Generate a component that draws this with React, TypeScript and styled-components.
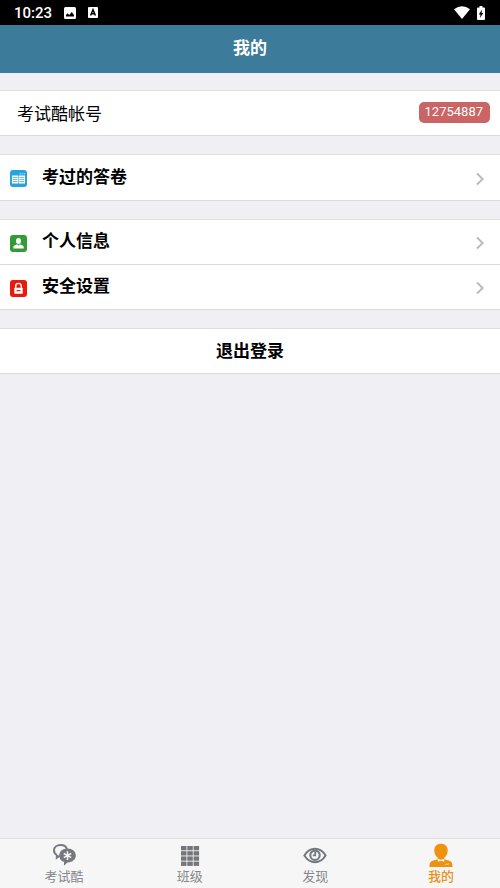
import React from "react";
import styled, { createGlobalStyle } from "styled-components";

const GlobalStyle = createGlobalStyle`
  * { box-sizing: border-box; }
  body {
    margin: 0;
    background: #efeff4;
    color: #000;
    font-family: Roboto, "Noto Sans CJK SC", sans-serif;
  }
  button { font: inherit; color: inherit; border: 0; margin: 0; padding: 0; background: none; cursor: pointer; }
  svg { display: block; flex: none; }
`;

const Screen = styled.div`
  display: flex;
  flex-direction: column;
  min-height: 100vh;
`;

const StatusBar = styled.div`
  display: flex;
  align-items: center;
  justify-content: space-between;
  height: 25px;
  padding: 0 15px 0 14px;
  background: #000;
  color: #fff;
  font-size: 15px;
  font-weight: 500;
`;

const StatusGroup = styled.div<{ $gap: number }>`
  display: flex;
  align-items: center;
  gap: ${(p) => p.$gap}px;
`;

const Header = styled.header`
  display: flex;
  align-items: center;
  justify-content: center;
  height: 48px;
  padding-bottom: 2px;
  background: #3d7b9b;
  color: #fff;
`;

const Title = styled.h1`
  margin: 0;
  font-size: 17px;
  line-height: 24px;
  font-weight: 700;
`;

const Main = styled.main`
  flex: 1;
  display: flex;
  flex-direction: column;
  gap: 18px;
  padding: 17px 0;
`;

const Group = styled.section`
  border-top: 1px solid #dedee1;
  border-bottom: 1px solid #dadadd;
  background: #fff;
`;

const AccountRow = styled.div`
  display: flex;
  align-items: center;
  justify-content: space-between;
  height: 44px;
  padding: 0 10px 2px 17px;
  font-size: 17px;
`;

const Badge = styled.span`
  height: 21px;
  padding: 0 7px 0 6px;
  border-radius: 5px;
  background: #cb6464;
  color: #fff;
  font-size: 13px;
  line-height: 19px;
`;

const LinkRow = styled.button`
  display: flex;
  align-items: center;
  width: 100%;
  height: 45px;
  padding: 2px 16px 0 10px;
  text-align: left;

  &:not(:last-child) {
    height: 44px;
  }

  & + & {
    border-top: 1px solid #dadadd;
  }
`;

const RowLabel = styled.span`
  flex: 1;
  padding: 0 0 4px 15px;
  font-size: 17px;
  line-height: 24px;
  font-weight: 700;
`;

const LogoutButton = styled.button`
  display: block;
  width: 100%;
  height: 44px;
  padding-bottom: 4px;
  font-size: 17px;
  font-weight: 700;
`;

const TabBar = styled.nav`
  position: sticky;
  bottom: 0;
  display: flex;
  justify-content: space-between;
  height: 50px;
  padding: 0 29px 0 34px;
  border-top: 1px solid #dedee1;
  background: #f6f6f6;
`;

const Tab = styled.button<{ $active?: boolean }>`
  display: flex;
  flex-direction: column;
  align-items: center;
  gap: 1px;
  width: 60px;
  padding-top: 4px;
  font-size: 13px;
  line-height: 18px;
  font-weight: ${(p) => (p.$active ? 500 : 400)};
  color: ${(p) => (p.$active ? "#e8921a" : "#85888c")};
`;

const PictureIcon = () => (
  <svg width="12" height="12" viewBox="0 0 12 12" aria-hidden="true">
    <rect width="12" height="12" rx="1.5" fill="#fff" />
    <path d="M2 9.5V8l1.6-1.7L5.2 8l2.6-3L10 8v1.5z" fill="#000" />
  </svg>
);

const InputModeIcon = () => (
  <svg width="10" height="11" viewBox="0 0 10 11" aria-hidden="true">
    <rect width="10" height="11" rx="1" fill="#fff" />
    <path d="M2.6 8.5 5 2.8l2.4 5.7M3.5 6.8h3" fill="none" stroke="#000" strokeWidth="1.5" />
  </svg>
);

const WifiIcon = () => (
  <svg width="16" height="13" viewBox="0 0 16 13" aria-hidden="true">
    <path d="M0 3.2Q8-2.8 16 3.2L8 13z" fill="#fff" />
  </svg>
);

const BatteryIcon = () => (
  <svg width="8" height="14" viewBox="0 0 8 14" aria-hidden="true">
    <path d="M2.5 0h3v1.5H7q1 0 1 1V13q0 1-1 1H1q-1 0-1-1V2.500q0-1 1-1h1.500z" fill="#fff" />
    <path d="M5 3.500 1.800 8.400h1.700L3 12l3.300-5H4.500z" fill="#000" />
  </svg>
);

const PapersIcon = () => (
  <svg width="17" height="17" viewBox="0 0 17 17" aria-hidden="true">
    <rect width="17" height="17" rx="3" fill="#27a3dd" />
    <path d="M2 5.500h6.200v8H2zM8.800 5.500H15v8H8.800z" fill="#fff" />
    <path d="M3 7.500h4.500M3 9.500h4.500M3 11.500h4.500M9.500 7.500H14M9.500 9.500H14M9.500 11.500H14" stroke="#27a3dd" strokeWidth=".7" />
    <path d="M9.500 3.800h1.300M11.600 3.800h1.300M13.700 3.800H15" stroke="#b9e2f5" />
  </svg>
);

const ProfileIcon = () => (
  <svg width="17" height="17" viewBox="0 0 17 17" aria-hidden="true">
    <rect width="17" height="17" rx="3" fill="#339b35" />
    <ellipse cx="8.500" cy="6" rx="2.500" ry="2.900" fill="#fff" />
    <path d="M3.300 13.500v-1.300q0-1.300 1.500-1.900l2.500-1 1.200 1.500 1.200-1.500 2.500 1q1.500.6 1.500 1.900v1.300z" fill="#fff" />
  </svg>
);

const LockIcon = () => (
  <svg width="17" height="17" viewBox="0 0 17 17" aria-hidden="true">
    <rect width="17" height="17" rx="3" fill="#e9190c" />
    <path d="M5.700 8V6.200q0-2.800 2.800-2.800t2.800 2.800V8" fill="none" stroke="#fff" strokeWidth="1.400" />
    <rect x="4.300" y="7.800" width="8.400" height="6" rx=".5" fill="#fff" />
    <path d="M6.500 10.700h4" stroke="#e9190c" strokeWidth="1.200" />
  </svg>
);

const Chevron = () => (
  <svg width="8" height="14" viewBox="0 0 8 14" aria-hidden="true">
    <path d="m1 1.500 5.700 5.500L1 12.500" fill="none" stroke="#b6b6bb" strokeWidth="1.800" />
  </svg>
);

const ChatIcon = () => (
  <svg width="24" height="24" viewBox="0 0 24 24" fill="none" aria-hidden="true">
    <path d="M4.800 11.800Q2 10.300 2 7.400C2 4.200 4.900 2 8.700 2c3.200 0 5.300 1.500 6.200 3.800M4.800 11.800v3l2.600-2" stroke="#74797e" strokeWidth="2" />
    <path d="M15.500 5.500c5 0 8.300 3 8.300 7s-3.200 6.700-8.300 6.900l-3.600 3.400.2-3.900C8.900 17.900 7.200 15.600 7.200 12.500c0-4 3.300-7 8.300-7z" fill="#74797e" />
    <path d="M15.500 8.300v8.600M11.800 10.500l7.400 4.200M19.200 10.500l-7.400 4.200" stroke="#f6f6f6" strokeWidth="1.500" />
  </svg>
);

const GridIcon = () => (
  <svg width="24" height="24" viewBox="0 0 24 24" fill="#74767b" aria-hidden="true">
    {[3, 8.200, 13.400, 18.600].map((y) =>
      [3, 9.300, 15.600].map((x) => <rect key={`${x}-${y}`} x={x} y={y} width="5.500" height="4.300" />)
    )}
  </svg>
);

const EyeIcon = () => (
  <svg width="24" height="24" viewBox="0 0 24 24" fill="none" stroke="#74797e" aria-hidden="true">
    <path d="M1.400 12.500Q5.500 5.800 12 5.800t10.600 6.700Q18.500 19.200 12 19.200T1.400 12.500z" strokeWidth="2" />
    <circle cx="12" cy="12.300" r="4.700" strokeWidth="2.100" />
    <path d="M12.200 8.800v3.500H9.800" strokeWidth="1.800" />
  </svg>
);

const PersonIcon = () => (
  <svg width="24" height="24" viewBox="0 0 24 24" fill="#ef930f" aria-hidden="true">
    <path d="M12 .8c4.200 0 6.700 2.600 6.700 6.500 0 3.500-1.300 6-3.500 7.500v1.400l5.100 1.600c2.500.8 3.200 2.500 3.300 6.200H.4c.1-3.700.8-5.400 3.300-6.200l5.100-1.600v-1.400c-2.200-1.500-3.500-4-3.500-7.500C5.300 3.400 7.800.8 12 .8z" />
    <path d="m8.800 15.700 3.200 1 3.200-1v3l-3.200-1-3.200 1zM15.500 21.600l1.700-.9 1.200.3 1.100-1v1.600z" fill="#f6f6f6" />
  </svg>
);

const App = () => (
  <>
    <GlobalStyle />
    <Screen>
      <StatusBar>
        <StatusGroup $gap={12}>
          <span>10:23</span>
          <PictureIcon />
          <InputModeIcon />
        </StatusGroup>
        <StatusGroup $gap={7}>
          <WifiIcon />
          <BatteryIcon />
        </StatusGroup>
      </StatusBar>
      <Header>
        <Title>我的</Title>
      </Header>
      <Main>
        <Group>
          <AccountRow>
            <span>考试酷帐号</span>
            <Badge>12754887</Badge>
          </AccountRow>
        </Group>
        <Group>
          <LinkRow type="button">
            <PapersIcon />
            <RowLabel>考过的答卷</RowLabel>
            <Chevron />
          </LinkRow>
        </Group>
        <Group>
          <LinkRow type="button">
            <ProfileIcon />
            <RowLabel>个人信息</RowLabel>
            <Chevron />
          </LinkRow>
          <LinkRow type="button">
            <LockIcon />
            <RowLabel>安全设置</RowLabel>
            <Chevron />
          </LinkRow>
        </Group>
        <Group>
          <LogoutButton type="button">退出登录</LogoutButton>
        </Group>
      </Main>
      <TabBar>
        <Tab type="button"><ChatIcon />考试酷</Tab>
        <Tab type="button"><GridIcon />班级</Tab>
        <Tab type="button"><EyeIcon />发现</Tab>
        <Tab type="button" $active aria-current="page"><PersonIcon />我的</Tab>
      </TabBar>
    </Screen>
  </>
);

export default App;
